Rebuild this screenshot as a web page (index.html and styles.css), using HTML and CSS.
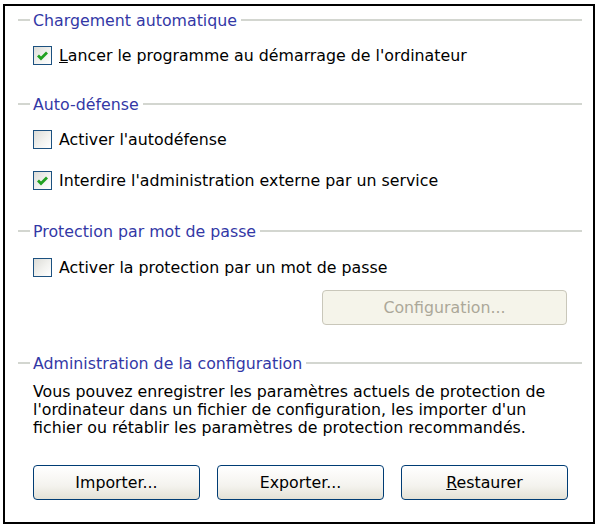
FILE: index.html
```html
<!DOCTYPE html>
<html lang="fr">
<head>
<meta charset="utf-8">
<link rel="stylesheet" href="styles.css">
</head>
<body>
<div class="frame">
  <div class="group-title g1"><span class="dash"></span><span class="label">Chargement automatique</span><span class="rule"></span></div>
  <label class="check r1"><span class="box on"><svg viewBox="0 0 19 19" width="19" height="19"><path d="M5 9.5 L8 12.5 L14 6.5" fill="none" stroke="#21a121" stroke-width="2.8"/></svg></span><span><u>L</u>ancer le programme au démarrage de l'ordinateur</span></label>

  <div class="group-title g2"><span class="dash"></span><span class="label">Auto-défense</span><span class="rule"></span></div>
  <label class="check r2"><span class="box"></span><span>Activer l'autodéfense</span></label>
  <label class="check r3"><span class="box on"><svg viewBox="0 0 19 19" width="19" height="19"><path d="M5 9.5 L8 12.5 L14 6.5" fill="none" stroke="#21a121" stroke-width="2.8"/></svg></span><span>Interdire l'administration externe par un service</span></label>

  <div class="group-title g3"><span class="dash"></span><span class="label">Protection par mot de passe</span><span class="rule"></span></div>
  <label class="check r4"><span class="box"></span><span>Activer la protection par un mot de passe</span></label>
  <div class="config-row"><button class="btn disabled">Configuration...</button></div>

  <div class="group-title g4"><span class="dash"></span><span class="label">Administration de la configuration</span><span class="rule"></span></div>
  <p class="desc">Vous pouvez enregistrer les paramètres actuels de protection de<br>l'ordinateur dans un fichier de configuration, les importer d'un<br>fichier ou rétablir les paramètres de protection recommandés.</p>
  <div class="btn-row">
    <button class="btn">Importer...</button>
    <button class="btn">Exporter...</button>
    <button class="btn"><u>R</u>estaurer</button>
  </div>
</div>
</body>
</html>
```

FILE: styles.css
```css
html, body {
  margin: 0;
  padding: 0;
  background: #fff;
}
body {
  font-family: "DejaVu Sans", Verdana, sans-serif;
  font-size: 15.8px;
  color: #000;
}
.frame {
  margin: 4px 0 0 3px;
  width: 592px;
  height: 520px;
  box-sizing: border-box;
  border: 2px solid #000;
  padding: 0 11px 0 13px;
  display: flex;
  flex-direction: column;
}
.group-title {
  display: flex;
  align-items: center;
  height: 20px;
}
.dash {
  width: 12px;
  height: 2px;
  background: #d3d6d0;
}
.rule {
  flex: 1;
  height: 2px;
  background: #d3d6d0;
}
.label {
  color: #3338a6;
  padding: 0 4px 0 3px;
  white-space: nowrap;
}
.g1 { margin-top: 4px; }
.g2 { margin-top: 29px; }
.g3 { margin-top: 31px; }
.g4 { margin-top: 28px; }
.check {
  display: flex;
  align-items: center;
  height: 20px;
  padding-left: 15px;
  white-space: nowrap;
}
.r1 { margin-top: 15px; }
.r2 { margin-top: 15px; }
.r3 { margin-top: 21px; }
.r4 { margin-top: 16px; }
.box {
  width: 19px;
  height: 19px;
  box-sizing: border-box;
  border: 1px solid #1c5180;
  background: linear-gradient(135deg, #dcdcd7 0%, #f2f2ef 55%, #ffffff 100%);
  margin-right: 7px;
  flex: none;
  position: relative;
}
.box svg {
  position: absolute;
  left: -1px;
  top: -1px;
}
.config-row {
  display: flex;
  justify-content: flex-end;
  margin-top: 13px;
  padding-right: 15px;
}
.btn {
  font-family: inherit;
  font-size: 15.8px;
  color: #000;
  height: 35px;
  width: 167px;
  border: 1px solid #003c74;
  border-radius: 4px;
  background: linear-gradient(#ffffff 0%, #f4f3ee 60%, #e3e1d6 100%);
  padding: 0;
}
.btn.disabled {
  width: 245px;
  color: #aca899;
  border-color: #c9c7ba;
  background: #f5f4ea;
}
.desc {
  margin: 10px 0 0 15px;
  line-height: 18px;
  white-space: nowrap;
}
.btn-row {
  display: flex;
  gap: 17px;
  margin-top: 28px;
  padding-left: 15px;
}
```
